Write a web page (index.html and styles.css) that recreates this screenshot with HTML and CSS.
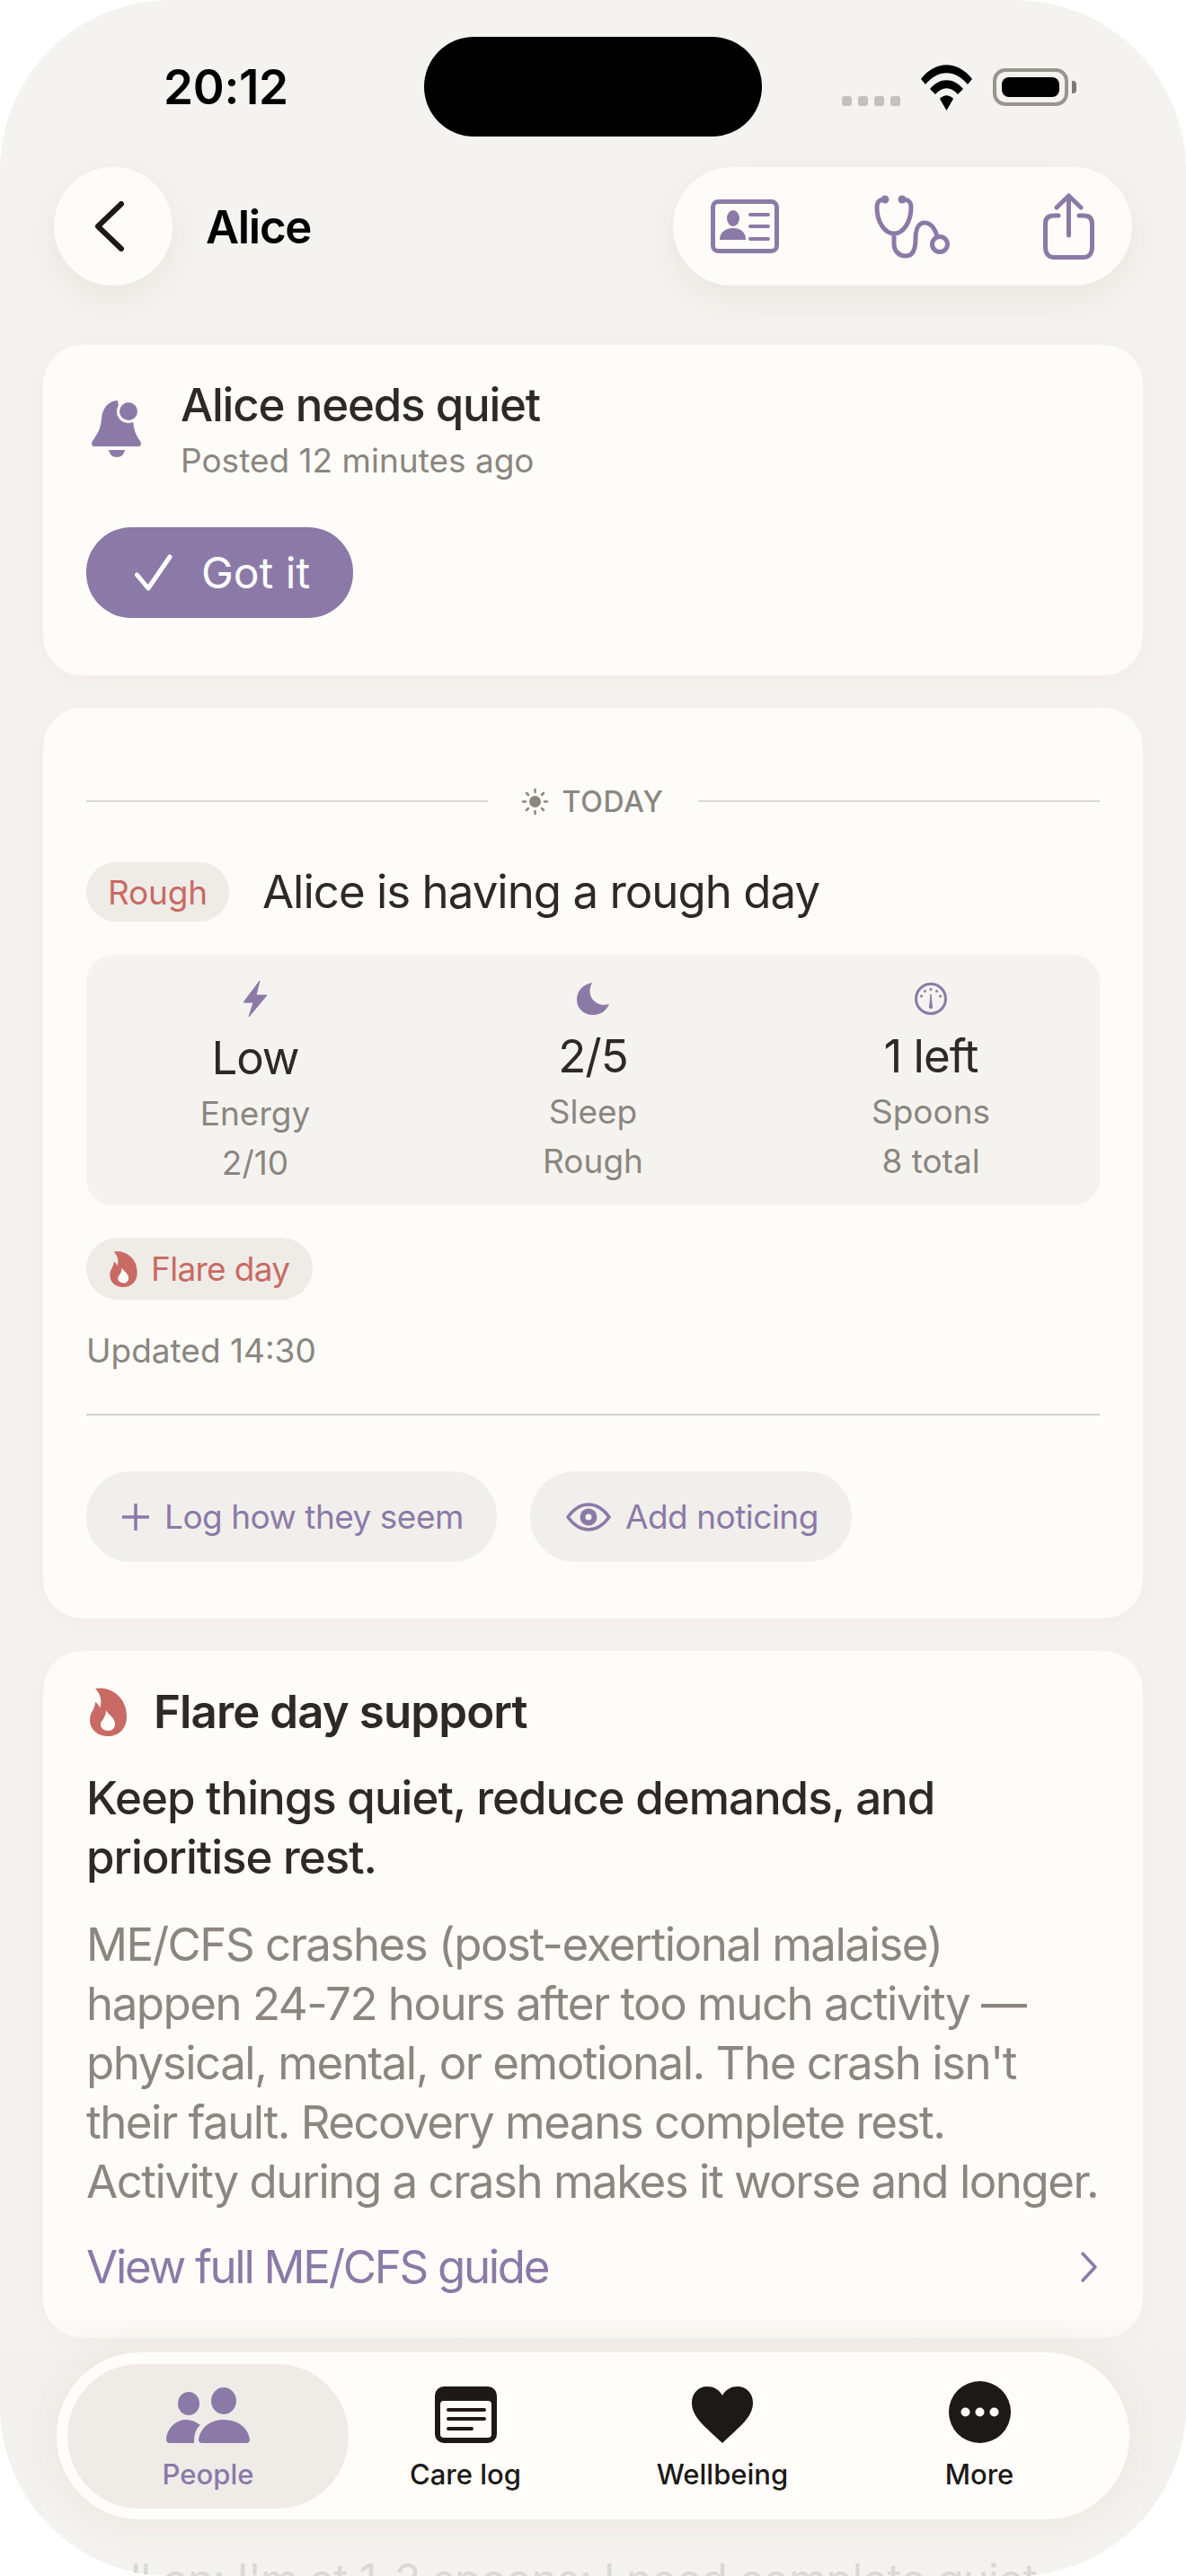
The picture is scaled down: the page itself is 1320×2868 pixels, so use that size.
FILE: index.html
```html
<!DOCTYPE html>
<html lang="en">
<head>
    <meta charset="UTF-8">
    <meta name="viewport" content="width=device-width, initial-scale=1.0">
    <title>Alice</title>
    <link rel="stylesheet" href="styles.css">
</head>
<body>
<div class="screen">
    <!-- Status bar -->
    <div class="status-bar">
        <span class="time">20:12</span>
        <div class="island"></div>
        <div class="status-icons">
            <div class="signal"><i></i><i></i><i></i><i></i></div>
            <svg class="wifi" viewBox="0 0 57 52" width="57" height="52">
                <path d="M0 17 C16 -4 41 -4 57 17 L52 23 C38 6 19 6 5 23 Z"/>
                <path d="M10 28 C21 15 36 15 47 28 L41 34 C33 25 24 25 16 34 Z"/>
                <path d="M21 39 C26 34 31 34 36 39 L28.500 52 Z"/>
            </svg>
            <div class="battery"><div class="battery-fill"></div></div>
            <div class="battery-cap"></div>
        </div>
    </div>

    <!-- Header -->
    <header class="top-bar">
        <button class="back-btn">
            <svg viewBox="0 0 34 56" width="34" height="56">
                <path d="M30 3 L4 28 L30 53" fill="none" stroke="#1c1917" stroke-width="6" stroke-linecap="round" stroke-linejoin="round"/>
            </svg>
        </button>
        <h1 class="person-name">Alice</h1>
        <div class="action-pill">
            <svg class="icon-id" viewBox="0 0 76 60" width="76" height="60">
                <rect x="2.500" y="2.500" width="71" height="55" rx="6" fill="none" stroke="#8b7aa8" stroke-width="5"/>
                <ellipse cx="25" cy="21" rx="7" ry="9" fill="#8b7aa8"/>
                <path d="M10 45 C10 36 17 32 25 32 C33 32 39 36 39 45 Z" fill="#8b7aa8"/>
                <path d="M44 17 H64 M44 30 H64 M44 44 H64" stroke="#8b7aa8" stroke-width="4" stroke-linecap="round"/>
            </svg>
            <svg class="icon-steth" viewBox="0 0 90 72" width="90" height="72">
                <path d="M16 6 C10 6 7 8 7 15 C7 30 15 44 26 44 C37 44 45 30 45 15 C45 8 42 6 35 6 M26 44 V55 C26 64 32 69 39 69 C48 69 50 60 50 50 C50 38 54 32 60 32 C68 32 72 40 74 47" fill="none" stroke="#8b7aa8" stroke-width="5" stroke-linecap="round"/>
                <circle cx="16" cy="6" r="4.500" fill="#8b7aa8"/>
                <circle cx="35" cy="6" r="4.500" fill="#8b7aa8"/>
                <circle cx="77" cy="56" r="8.500" fill="none" stroke="#8b7aa8" stroke-width="5"/>
            </svg>
            <svg class="icon-share" viewBox="0 0 57 74" width="57" height="74">
                <path d="M28.500 3 V47 M15 16 L28.500 3 L42 16" fill="none" stroke="#8b7aa8" stroke-width="5" stroke-linecap="round" stroke-linejoin="round"/>
                <path d="M17 25 H12 C6 25 2.500 28 2.500 34 V60 C2.500 67 6 71.500 12 71.500 H45 C51 71.500 54.500 67 54.500 60 V34 C54.500 28 51 25 45 25 H40" fill="none" stroke="#8b7aa8" stroke-width="5" stroke-linecap="round"/>
            </svg>
        </div>
    </header>

    <main class="content">
        <!-- Alert -->
        <section class="card alert-card">
            <div class="alert-row">
                <svg class="bell" viewBox="0 0 55 63" width="55" height="63">
                    <path d="M29 0 C19 0 12 8 11 20 C10 32 7 36 1 45 C-1 48 0 51 4 51 H51 C55 51 56 48 54 45 C49 38 47 33 46 22 L30 6 Z" fill="#8b7aa8"/>
                    <circle cx="41" cy="12" r="13" fill="#fefcf8"/>
                    <circle cx="41" cy="12" r="10" fill="#8b7aa8"/>
                    <path d="M19 55 H37 C36 60 33 63 28 63 C23 63 20 60 19 55 Z" fill="#8b7aa8"/>
                </svg>
                <div>
                    <h2 class="alert-title">Alice needs quiet</h2>
                    <p class="muted alert-time">Posted 12 minutes ago</p>
                </div>
            </div>
            <button class="got-it">
                <svg viewBox="0 0 42 41" width="42" height="41">
                    <path d="M2.500 23 L15 38 L39 3" fill="none" stroke="#fff" stroke-width="5" stroke-linecap="round" stroke-linejoin="round"/>
                </svg>
                Got it
            </button>
        </section>

        <!-- Today -->
        <section class="card today-card">
            <div class="today-label">
                <span class="rule"></span>
                <svg viewBox="0 0 31 31" width="31" height="31">
                    <circle cx="15.500" cy="15.500" r="6.500" fill="#8a8680"/>
                    <path d="M15.500 2 V5 M15.500 26 V29 M2 15.500 H5 M26 15.500 H29 M6 6 L8 8 M23 23 L25 25 M6 25 L8 23 M23 8 L25 6" stroke="#8a8680" stroke-width="2.500" stroke-linecap="round"/>
                </svg>
                <span class="today-text">TODAY</span>
                <span class="rule"></span>
            </div>
            <div class="mood-row">
                <span class="chip-rough">Rough</span>
                <h2 class="mood-title">Alice is having a rough day</h2>
            </div>
            <div class="stats">
                <div class="stat">
                    <svg viewBox="0 0 26 40" width="26" height="40">
                        <path d="M18 0 L0 24 H11 L6 40 L26 16 H14 Z" fill="#8b7aa8" stroke="#8b7aa8" stroke-linejoin="round"/>
                    </svg>
                    <div class="stat-value">Low</div>
                    <div class="stat-label">Energy</div>
                    <div class="stat-label">2/10</div>
                </div>
                <div class="stat">
                    <svg viewBox="0 0 36 36" width="36" height="36">
                        <path d="M17 0 C7 2 0 9 0 19 C0 29 8 36 18 36 C27 36 33 31 36 24 C22 28 9 16 17 0 Z" fill="#8b7aa8"/>
                    </svg>
                    <div class="stat-value">2/5</div>
                    <div class="stat-label">Sleep</div>
                    <div class="stat-label">Rough</div>
                </div>
                <div class="stat">
                    <svg viewBox="0 0 36 36" width="36" height="36">
                        <circle cx="18" cy="18" r="16.500" fill="none" stroke="#8b7aa8" stroke-width="3"/>
                        <path d="M16.500 28 L18 13 L19.500 28 Q18 30 16.500 28 Z" fill="#8b7aa8" stroke="#8b7aa8"/>
                        <circle cx="18" cy="7.500" r="1.500" fill="#8b7aa8"/>
                        <circle cx="11.500" cy="9.500" r="1.500" fill="#8b7aa8"/>
                        <circle cx="24.500" cy="9.500" r="1.500" fill="#8b7aa8"/>
                        <circle cx="7.500" cy="15" r="1.500" fill="#8b7aa8"/>
                        <circle cx="28.500" cy="15" r="1.500" fill="#8b7aa8"/>
                    </svg>
                    <div class="stat-value">1 left</div>
                    <div class="stat-label">Spoons</div>
                    <div class="stat-label">8 total</div>
                </div>
            </div>
            <div class="chip-flare">
                <svg viewBox="0 0 41 54" width="31" height="40">
                    <use href="#flame"/>
                </svg>
                Flare day
            </div>
            <p class="muted updated">Updated 14:30</p>
            <hr class="divider">
            <div class="log-actions">
                <button class="soft-btn soft-log">
                    <svg viewBox="0 0 30 30" width="30" height="30">
                        <path d="M15 1 V29 M1 15 H29" stroke="#8b7aa8" stroke-width="3.500" stroke-linecap="round"/>
                    </svg>
                    Log how they seem
                </button>
                <button class="soft-btn soft-notice">
                    <svg viewBox="0 0 50 32" width="50" height="32">
                        <path d="M2 16 C10 5 17 2 25 2 C33 2 40 5 48 16 C40 27 33 30 25 30 C17 30 10 27 2 16 Z" fill="none" stroke="#8b7aa8" stroke-width="3.500" stroke-linejoin="round"/>
                        <circle cx="25" cy="16" r="9.500" fill="#8b7aa8"/>
                        <circle cx="25" cy="16" r="3.500" fill="#f3f1ed"/>
                    </svg>
                    Add noticing
                </button>
            </div>
        </section>

        <!-- Flare support -->
        <section class="card support-card">
            <div class="support-head">
                <svg viewBox="0 0 41 54" width="41" height="54">
                    <g id="flame">
                        <path d="M6 1 C20 -2 41 8 41 32 C41 46 32 54 20 54 C8 54 0 46 0 36 C0 27 6 24 6 16 C9 18 11 20 11 23 C14 15 12 7 6 1 Z" fill="#c96a64"/>
                        <path d="M18 25 C20 30 28 33 28 40 C28 45 25 48 20.500 48 C16 48 12 45 12 41 C12 37 15 36 16 33 C17 31 18 28 18 25 Z" fill="#fefcf8"/>
                    </g>
                </svg>
                <h2 class="support-title">Flare day support</h2>
            </div>
            <p class="support-lead">Keep things quiet, reduce demands, and prioritise rest.</p>
            <p class="support-body">ME/CFS crashes (post-exertional malaise) happen 24-72 hours after too much activity — physical, mental, or emotional. The crash isn't their fault. Recovery means complete rest. Activity during a crash makes it worse and longer.</p>
            <a class="guide-link" href="#">
                View full ME/CFS guide
                <svg viewBox="0 0 20 36" width="20" height="36">
                    <path d="M3 3 L17 18 L3 33" fill="none" stroke="#8b7aa8" stroke-width="3.500" stroke-linecap="round" stroke-linejoin="round"/>
                </svg>
            </a>
        </section>

        <!-- Next card, mostly under the tab bar -->
        <section class="card note-card">
            <p class="note-text">Call on: I'm at 1-2 spoons; I need complete quiet</p>
        </section>
    </main>

    <div class="bottom-fade"></div>

    <!-- Tab bar -->
    <nav class="tab-bar">
        <a class="tab tab-active" href="#">
            <svg viewBox="0 0 93 62" width="93" height="62">
                <ellipse cx="25" cy="18" rx="12" ry="13" fill="#8b7aa8"/>
                <ellipse cx="64" cy="15" rx="14" ry="15" fill="#8b7aa8"/>
                <path d="M0 58 C1 44 12 36 22 36 C28 36 33 38 38 42 C33 46 31 52 31 62 H4 C1 62 0 60 0 58 Z" fill="#8b7aa8"/>
                <path d="M36 58 C38 44 50 36 64 36 C78 36 91 44 93 58 C93 60 92 62 89 62 H40 C37 62 36 60 36 58 Z" fill="#8b7aa8"/>
            </svg>
            <span>People</span>
        </a>
        <a class="tab" href="#">
            <svg viewBox="0 0 69 63" width="69" height="63">
                <rect width="69" height="63" rx="10" fill="#1c1917"/>
                <rect x="6" y="16" width="57" height="41" rx="4" fill="#fefcf8"/>
                <path d="M15 26 H55 M15 36 H55 M15 47 H41" stroke="#1c1917" stroke-width="4" stroke-linecap="round"/>
            </svg>
            <span>Care log</span>
        </a>
        <a class="tab" href="#">
            <svg viewBox="0 0 68 63" width="68" height="63">
                <path d="M34 63 C14 44 0 34 0 18 C0 7 8 0 17 0 C24 0 30 3 34 10 C38 3 44 0 51 0 C60 0 68 7 68 18 C68 34 54 44 34 63 Z" fill="#1c1917"/>
            </svg>
            <span>Wellbeing</span>
        </a>
        <a class="tab" href="#">
            <svg viewBox="0 0 69 69" width="69" height="69">
                <circle cx="34.500" cy="34.500" r="34.500" fill="#1c1917"/>
                <circle cx="18.500" cy="34.500" r="5" fill="#fefcf8"/>
                <circle cx="34.500" cy="34.500" r="5" fill="#fefcf8"/>
                <circle cx="50.500" cy="34.500" r="5" fill="#fefcf8"/>
            </svg>
            <span>More</span>
        </a>
    </nav>
</div>
</body>
</html>
```

FILE: styles.css
```css
* {
    box-sizing: border-box;
}
body {
    font-family: Inter, "Liberation Sans", sans-serif;
    margin: 0;
    background-color: white;
    color: #2d2a26;
}
button {
    font-family: inherit;
    border: none;
    cursor: pointer;
}
h1, h2, p {
    margin: 0;
}
svg {
    display: block;
    flex: none;
}
.screen {
    position: relative;
    height: 2868px;
    overflow: hidden;
    border-radius: 190px;
    background-color: #f5f3ef;
}

/* Status bar */
.status-bar {
    display: flex;
    align-items: center;
    height: 111px;
    margin-top: 41px;
    padding-left: 182px;
}
.time {
    width: 290px;
    font-size: 53px;
    font-weight: 600;
    letter-spacing: -0.3px;
    color: #000;
}
.island {
    width: 376px;
    height: 111px;
    border-radius: 56px;
    background-color: #000;
}
.status-icons {
    display: flex;
    align-items: flex-end;
    margin-left: 89px;
    height: 42px;
}
.status-icons .wifi {
    margin: 0 23px;
    fill: #000;
    align-self: center;
}
.signal {
    display: flex;
    gap: 7px;
}
.signal i {
    width: 11px;
    height: 11px;
    border-radius: 3px;
    background-color: #c3c0bd;
}
.battery {
    width: 84px;
    height: 42px;
    padding: 6px;
    border: 4px solid #98958f;
    border-radius: 14px;
}
.battery-fill {
    height: 100%;
    border-radius: 8px;
    background-color: #000;
}
.battery-cap {
    align-self: center;
    width: 5px;
    height: 14px;
    margin-left: 4px;
    border-radius: 0 4px 4px 0;
    background-color: #7d7a75;
}

/* Header */
.top-bar {
    display: flex;
    align-items: center;
    margin-top: 34px;
    padding: 0 60px;
}
.back-btn {
    display: flex;
    align-items: center;
    justify-content: center;
    width: 132px;
    height: 132px;
    padding: 0 9px 0 0;
    border-radius: 50%;
    background-color: #fefcf8;
    box-shadow: 0 14px 40px rgba(80, 60, 50, 0.07);
}
.person-name {
    margin-left: 37px;
    font-size: 51px;
    font-weight: 600;
    letter-spacing: -1.3px;
    color: #000;
}
.action-pill {
    display: flex;
    align-items: center;
    justify-content: space-between;
    width: 511px;
    height: 132px;
    margin-left: auto;
    padding: 0 42px;
    border-radius: 66px;
    background-color: #fefcf8;
    box-shadow: 0 14px 40px rgba(80, 60, 50, 0.07);
}

/* Cards */
.content {
    display: flex;
    flex-direction: column;
    gap: 36px;
    margin-top: 66px;
    padding: 0 48px;
}
.card {
    border-radius: 44px;
    background-color: #fefcf8;
    box-shadow: 0 4px 30px rgba(80, 60, 50, 0.03);
}
.muted {
    font-size: 37px;
    line-height: 48px;
    color: #8a8680;
}
.alert-card {
    padding: 34px 48px 64px;
}
.alert-row {
    display: flex;
    align-items: center;
    gap: 44px;
    padding-left: 6px;
}
.alert-title {
    font-size: 51px;
    font-weight: 500;
    letter-spacing: -1.2px;
    line-height: 66px;
}
.alert-time {
    margin-top: 5px;
}
.got-it {
    display: flex;
    align-items: center;
    gap: 32px;
    height: 101px;
    margin-top: 50px;
    padding: 0 48px 0 54px;
    border-radius: 50px;
    background-color: #8b7aa8;
    color: white;
    font-size: 48px;
    font-weight: 400;
}

.today-card {
    padding: 80px 48px 63px;
}
.today-label {
    display: flex;
    align-items: center;
    height: 48px;
}
.rule {
    flex: 1;
    height: 2px;
    background-color: #dbd9d5;
}
.today-label svg {
    margin: 0 15px 0 37px;
}
.today-text {
    margin-right: 39px;
    font-size: 32px;
    font-weight: 500;
    letter-spacing: 0.8px;
    color: #8a8680;
}
.mood-row {
    display: flex;
    align-items: center;
    gap: 37px;
    margin-top: 44px;
}
.chip-rough {
    display: flex;
    align-items: center;
    height: 66px;
    padding: 0 24px;
    border-radius: 33px;
    background-color: #efecE8;
    color: #c96a64;
    font-size: 37px;
    letter-spacing: -0.2px;
}
.mood-title {
    font-size: 51px;
    font-weight: 400;
    letter-spacing: -1px;
    line-height: 66px;
}
.stats {
    display: grid;
    grid-template-columns: repeat(3, 1fr);
    align-items: center;
    height: 279px;
    margin-top: 37px;
    padding-top: 8px;
    border-radius: 30px;
    background-color: #f5f3ef;
}
.stat {
    display: flex;
    flex-direction: column;
    align-items: center;
}
.stat-value {
    margin-top: 16px;
    font-size: 51px;
    letter-spacing: -1px;
    line-height: 60px;
}
.stat-label {
    font-size: 37px;
    line-height: 55px;
    color: #8a8680;
}
.stat-value + .stat-label {
    margin-top: 4px;
}
.chip-flare {
    display: inline-flex;
    align-items: center;
    gap: 15px;
    height: 69px;
    margin-top: 36px;
    padding: 0 26px;
    border-radius: 35px;
    background-color: #efecE8;
    color: #c96a64;
    font-size: 37px;
    letter-spacing: -0.7px;
}
.updated {
    margin-top: 33px;
}
.divider {
    height: 2px;
    margin: 46px 0 62px;
    border: none;
    background-color: #d5d2ce;
}
.log-actions {
    display: flex;
    gap: 37px;
}
.soft-btn {
    display: flex;
    align-items: center;
    height: 101px;
    border-radius: 50px;
    background-color: #f1efeb;
    color: #8b7aa8;
    font-size: 37px;
    font-weight: 400;
    letter-spacing: -0.5px;
}
.soft-log {
    gap: 17px;
    padding: 0 37px 0 40px;
}
.soft-notice {
    gap: 16px;
    padding: 0 37px 0 40px;
}

.support-card {
    padding: 35px 48px 46px;
}
.support-head {
    display: flex;
    align-items: center;
    gap: 30px;
    padding-left: 4px;
}
.support-title {
    font-size: 51px;
    font-weight: 600;
    letter-spacing: -0.9px;
    line-height: 66px;
}
.support-lead {
    margin-top: 30px;
    font-size: 51px;
    font-weight: 500;
    letter-spacing: -1px;
    line-height: 66px;
}
.support-body {
    margin-top: 31px;
    font-size: 51px;
    letter-spacing: -1.5px;
    line-height: 66px;
    color: #8a8680;
}
.guide-link {
    display: flex;
    align-items: center;
    justify-content: space-between;
    margin-top: 29px;
    padding-right: 2px;
    color: #8b7aa8;
    font-size: 51px;
    letter-spacing: -2.3px;
    line-height: 66px;
    text-decoration: none;
}
.note-card {
    height: 400px;
    padding: 200px 48px 0 36px;
}
.note-text {
    font-size: 48px;
    letter-spacing: -0.4px;
    line-height: 66px;
    white-space: nowrap;
}

/* Tab bar */
.bottom-fade {
    position: absolute;
    left: 0;
    right: 0;
    top: 2570px;
    bottom: 0;
    background: linear-gradient(to bottom, rgba(243, 241, 237, 0), rgba(243, 241, 237, 0.3) 30px, rgba(243, 241, 237, 0.88) 50px);
}
.tab-bar {
    position: absolute;
    left: 63px;
    right: 63px;
    top: 2619px;
    display: flex;
    align-items: center;
    height: 186px;
    padding: 0 12px;
    border-radius: 93px;
    background-color: rgba(255, 253, 249, 0.97);
    box-shadow: 0 0 30px 20px rgba(80, 60, 50, 0.03);
}
.tab {
    display: flex;
    flex: 0 0 286px;
    flex-direction: column;
    align-items: center;
    justify-content: flex-end;
    height: 161px;
    padding-bottom: 17px;
    color: #1c1917;
    font-size: 31px;
    font-weight: 500;
    line-height: 42px;
    text-decoration: none;
}
.tab svg {
    margin-bottom: 14px;
}
.tab-active {
    flex-basis: 313px;
    margin-right: -13px;
    border-radius: 80px;
    background-color: #efecE8;
    color: #8b7aa8;
}
```
